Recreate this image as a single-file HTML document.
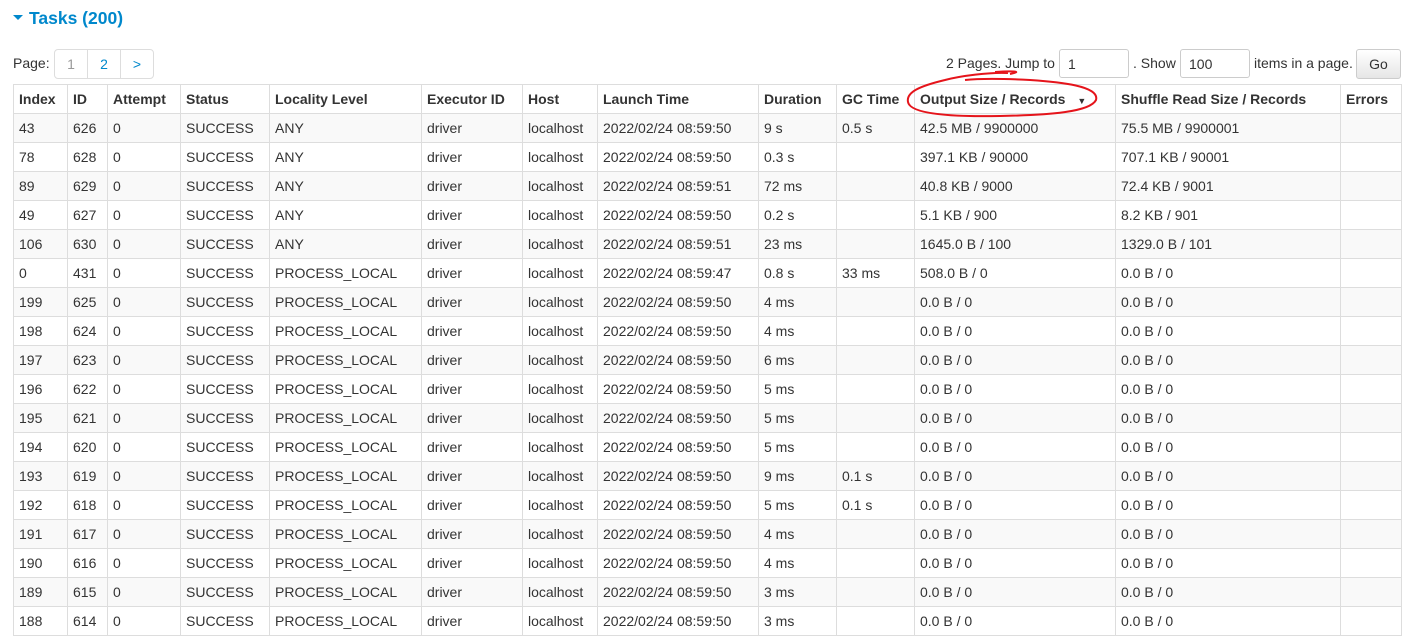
<!DOCTYPE html>
<html><head><meta charset="utf-8"><style>
body{margin:0;background:#fff;font-family:"Liberation Sans",Arial,sans-serif;font-size:14px;color:#333;width:1414px;height:611px;overflow:hidden;position:relative}
h4{position:absolute;left:13px;top:8px;margin:0;font-size:17.5px;font-weight:bold;color:#0088cc}
.tri{display:inline-block;width:0;height:0;border-left:5px solid transparent;border-right:5px solid transparent;border-top:5px solid #0088cc;vertical-align:middle;margin-right:6px;position:relative;top:-2px}
.pg{position:absolute;left:13px;top:55px;font-size:14px}
.pgs{position:absolute;left:54px;top:49px;height:28px;display:flex;border:1px solid #ddd;border-radius:4px}
.pgs span{width:32px;text-align:center;line-height:28px;border-left:1px solid #ddd;color:#0088cc;font-size:14px}
.pgs span:first-child{border-left:none;color:#999}
.a{position:absolute;top:55px;white-space:nowrap}
.inp{position:absolute;top:49px;border:1px solid #ccc;border-radius:3px;height:29px;box-sizing:border-box;padding:6px 8px;font-size:14px;line-height:16px}
.go{position:absolute;top:49px;left:1356px;border:1px solid #ccc;border-radius:3px;background:linear-gradient(#fff,#e6e6e6);height:30px;width:45px;box-sizing:border-box;text-align:center;line-height:28px}
table{position:absolute;left:13px;top:84px;border-collapse:collapse;table-layout:fixed;width:1388px}
td,th{border:1px solid #ddd;height:28px;padding:0 0 0 5px;text-align:left;white-space:nowrap;overflow:hidden;font-size:14px}
th{font-weight:bold;height:28px}
tbody tr:nth-child(odd){background:#f9f9f9}
</style></head><body>
<h4><span class="tri"></span>Tasks (200)</h4>
<div class="pg">Page:</div>
<div class="pgs"><span>1</span><span>2</span><span>&gt;</span></div>
<div class="a" style="left:946px">2 Pages. Jump to</div>
<div class="inp" style="left:1059px;width:70px">1</div>
<div class="a" style="left:1133px">. Show</div>
<div class="inp" style="left:1180px;width:70px">100</div>
<div class="a" style="left:1254px">items in a page.</div>
<div class="go">Go</div>
<table>
<colgroup><col style="width:54px"><col style="width:40px"><col style="width:73px"><col style="width:89px"><col style="width:152px"><col style="width:101px"><col style="width:75px"><col style="width:161px"><col style="width:78px"><col style="width:78px"><col style="width:201px"><col style="width:225px"><col style="width:61px"></colgroup>
<thead><tr><th>Index</th><th>ID</th><th>Attempt</th><th>Status</th><th>Locality Level</th><th>Executor ID</th><th>Host</th><th>Launch Time</th><th>Duration</th><th>GC Time</th><th>Output Size / Records <span style="font-size:9px;margin-left:8px">&#9660;</span></th><th>Shuffle Read Size / Records</th><th>Errors</th></tr></thead>
<tbody>
<tr><td>43</td><td>626</td><td>0</td><td>SUCCESS</td><td>ANY</td><td>driver</td><td>localhost</td><td>2022/02/24 08:59:50</td><td>9 s</td><td>0.5 s</td><td>42.5 MB / 9900000</td><td>75.5 MB / 9900001</td><td></td></tr>
<tr><td>78</td><td>628</td><td>0</td><td>SUCCESS</td><td>ANY</td><td>driver</td><td>localhost</td><td>2022/02/24 08:59:50</td><td>0.3 s</td><td></td><td>397.1 KB / 90000</td><td>707.1 KB / 90001</td><td></td></tr>
<tr><td>89</td><td>629</td><td>0</td><td>SUCCESS</td><td>ANY</td><td>driver</td><td>localhost</td><td>2022/02/24 08:59:51</td><td>72 ms</td><td></td><td>40.8 KB / 9000</td><td>72.4 KB / 9001</td><td></td></tr>
<tr><td>49</td><td>627</td><td>0</td><td>SUCCESS</td><td>ANY</td><td>driver</td><td>localhost</td><td>2022/02/24 08:59:50</td><td>0.2 s</td><td></td><td>5.1 KB / 900</td><td>8.2 KB / 901</td><td></td></tr>
<tr><td>106</td><td>630</td><td>0</td><td>SUCCESS</td><td>ANY</td><td>driver</td><td>localhost</td><td>2022/02/24 08:59:51</td><td>23 ms</td><td></td><td>1645.0 B / 100</td><td>1329.0 B / 101</td><td></td></tr>
<tr><td>0</td><td>431</td><td>0</td><td>SUCCESS</td><td>PROCESS_LOCAL</td><td>driver</td><td>localhost</td><td>2022/02/24 08:59:47</td><td>0.8 s</td><td>33 ms</td><td>508.0 B / 0</td><td>0.0 B / 0</td><td></td></tr>
<tr><td>199</td><td>625</td><td>0</td><td>SUCCESS</td><td>PROCESS_LOCAL</td><td>driver</td><td>localhost</td><td>2022/02/24 08:59:50</td><td>4 ms</td><td></td><td>0.0 B / 0</td><td>0.0 B / 0</td><td></td></tr>
<tr><td>198</td><td>624</td><td>0</td><td>SUCCESS</td><td>PROCESS_LOCAL</td><td>driver</td><td>localhost</td><td>2022/02/24 08:59:50</td><td>4 ms</td><td></td><td>0.0 B / 0</td><td>0.0 B / 0</td><td></td></tr>
<tr><td>197</td><td>623</td><td>0</td><td>SUCCESS</td><td>PROCESS_LOCAL</td><td>driver</td><td>localhost</td><td>2022/02/24 08:59:50</td><td>6 ms</td><td></td><td>0.0 B / 0</td><td>0.0 B / 0</td><td></td></tr>
<tr><td>196</td><td>622</td><td>0</td><td>SUCCESS</td><td>PROCESS_LOCAL</td><td>driver</td><td>localhost</td><td>2022/02/24 08:59:50</td><td>5 ms</td><td></td><td>0.0 B / 0</td><td>0.0 B / 0</td><td></td></tr>
<tr><td>195</td><td>621</td><td>0</td><td>SUCCESS</td><td>PROCESS_LOCAL</td><td>driver</td><td>localhost</td><td>2022/02/24 08:59:50</td><td>5 ms</td><td></td><td>0.0 B / 0</td><td>0.0 B / 0</td><td></td></tr>
<tr><td>194</td><td>620</td><td>0</td><td>SUCCESS</td><td>PROCESS_LOCAL</td><td>driver</td><td>localhost</td><td>2022/02/24 08:59:50</td><td>5 ms</td><td></td><td>0.0 B / 0</td><td>0.0 B / 0</td><td></td></tr>
<tr><td>193</td><td>619</td><td>0</td><td>SUCCESS</td><td>PROCESS_LOCAL</td><td>driver</td><td>localhost</td><td>2022/02/24 08:59:50</td><td>9 ms</td><td>0.1 s</td><td>0.0 B / 0</td><td>0.0 B / 0</td><td></td></tr>
<tr><td>192</td><td>618</td><td>0</td><td>SUCCESS</td><td>PROCESS_LOCAL</td><td>driver</td><td>localhost</td><td>2022/02/24 08:59:50</td><td>5 ms</td><td>0.1 s</td><td>0.0 B / 0</td><td>0.0 B / 0</td><td></td></tr>
<tr><td>191</td><td>617</td><td>0</td><td>SUCCESS</td><td>PROCESS_LOCAL</td><td>driver</td><td>localhost</td><td>2022/02/24 08:59:50</td><td>4 ms</td><td></td><td>0.0 B / 0</td><td>0.0 B / 0</td><td></td></tr>
<tr><td>190</td><td>616</td><td>0</td><td>SUCCESS</td><td>PROCESS_LOCAL</td><td>driver</td><td>localhost</td><td>2022/02/24 08:59:50</td><td>4 ms</td><td></td><td>0.0 B / 0</td><td>0.0 B / 0</td><td></td></tr>
<tr><td>189</td><td>615</td><td>0</td><td>SUCCESS</td><td>PROCESS_LOCAL</td><td>driver</td><td>localhost</td><td>2022/02/24 08:59:50</td><td>3 ms</td><td></td><td>0.0 B / 0</td><td>0.0 B / 0</td><td></td></tr>
<tr><td>188</td><td>614</td><td>0</td><td>SUCCESS</td><td>PROCESS_LOCAL</td><td>driver</td><td>localhost</td><td>2022/02/24 08:59:50</td><td>3 ms</td><td></td><td>0.0 B / 0</td><td>0.0 B / 0</td><td></td></tr>
</tbody></table>
<svg style="position:absolute;left:0;top:0" width="1414" height="611"><path d="M1008 73 C990 72 960 76 945 80 C920 86 906 92 908 102 C910 114 950 117 1000 116 C1050 115 1090 112 1096 100 C1100 86 1060 82 1030 80 C1010 79 985 78 965 80 M995 72 C1010 71 1025 71 1010 74" fill="none" stroke="#e5141b" stroke-width="2"/></svg>
</body></html>
